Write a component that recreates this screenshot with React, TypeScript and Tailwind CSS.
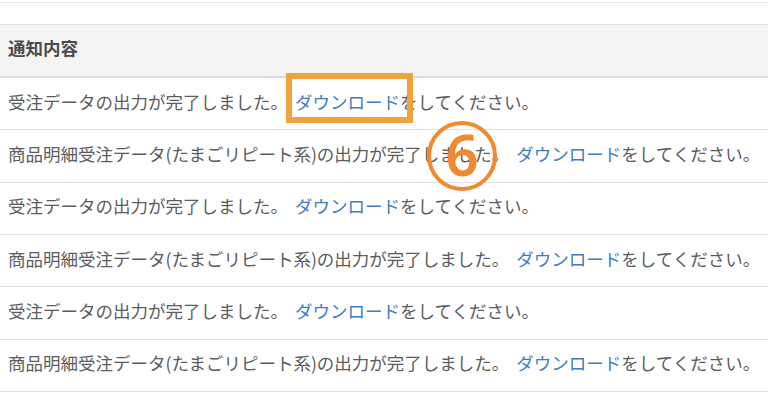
import React from "react";

const rows = [
  "受注データの出力が完了しました。",
  "商品明細受注データ(たまごリピート系)の出力が完了しました。",
  "受注データの出力が完了しました。",
  "商品明細受注データ(たまごリピート系)の出力が完了しました。",
  "受注データの出力が完了しました。",
  "商品明細受注データ(たまごリピート系)の出力が完了しました。",
];

export default function App() {
  return (
    <div
      className="relative w-[768px] h-[394px] overflow-hidden bg-white text-[#5c5c5c]"
      style={{ fontFamily: '"Noto Sans CJK JP", "Noto Sans", sans-serif' }}
    >
      <div className="h-[2px]" />
      <div className="h-[22px] border-t border-[#e8e8e8]" />
      <div className="h-[54px] bg-[#f4f4f4] border-t border-[#e2e2e2] border-b-2 border-b-[#dcdcdc] flex items-center px-[8px] pb-[4px]">
        <span className="text-[17.5px] font-bold text-[#4a4a4a]">通知内容</span>
      </div>
      {rows.map((t, i) => (
        <div
          key={i}
          className="h-[52.33px] border-b border-[#e0e0e0] flex items-center px-[8px] pb-[4px] whitespace-nowrap text-[17.5px]"
        >
          <span className="shrink-0">{t}</span>
          <span className="w-[7px] shrink-0" />
          <a className="text-[#3d7cc0] shrink-0">ダウンロード</a>
          <span className="shrink-0">をしてください。</span>
        </div>
      ))}
      <div className="absolute left-[286px] top-[73px] w-[127px] h-[50px] border-[6px] border-[#f2a23c]" />
      <svg
        className="absolute left-[426px] top-[120px] overflow-visible"
        width="72"
        height="72"
        viewBox="0 0 72 72"
      >
        <circle cx="36" cy="36" r="33" fill="none" stroke="#f08a2e" strokeWidth="4" />
        <text
          x="36"
          y="56"
          textAnchor="middle"
          fontSize="58"
          fontWeight="600"
          fill="#f08a2e"
          fontFamily="'Noto Sans', sans-serif"
        >
          6
        </text>
      </svg>
    </div>
  );
}
